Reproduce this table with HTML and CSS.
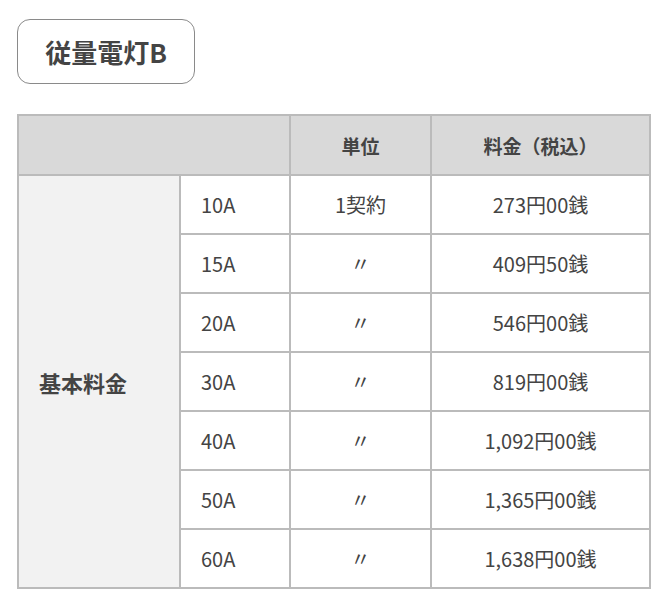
FILE: index.html
```html
<!DOCTYPE html>
<html lang="ja">
<head>
<meta charset="utf-8">
<link rel="stylesheet" href="styles.css">
</head>
<body>
<div class="page">
  <div class="title">従量電灯B</div>
  <table class="rates">
    <colgroup>
      <col class="c1"><col class="c2"><col class="c3"><col class="c4">
    </colgroup>
    <thead>
      <tr><th colspan="2"></th><th>単位</th><th>料金（税込）</th></tr>
    </thead>
    <tbody>
      <tr><th class="label" rowspan="7">基本料金</th><td class="amp">10A</td><td>1契約</td><td>273円00銭</td></tr>
      <tr><td class="amp">15A</td><td>〃</td><td>409円50銭</td></tr>
      <tr><td class="amp">20A</td><td>〃</td><td>546円00銭</td></tr>
      <tr><td class="amp">30A</td><td>〃</td><td>819円00銭</td></tr>
      <tr><td class="amp">40A</td><td>〃</td><td>1,092円00銭</td></tr>
      <tr><td class="amp">50A</td><td>〃</td><td>1,365円00銭</td></tr>
      <tr><td class="amp">60A</td><td>〃</td><td>1,638円00銭</td></tr>
    </tbody>
  </table>
</div>
</body>
</html>
```
FILE: styles.css
```css
html, body {
  margin: 0;
  padding: 0;
  background: #fff;
}
body {
  font-family: "Noto Sans CJK JP", "Noto Sans", sans-serif;
  color: #444;
}
.page {
  padding: 19px 0 0 17px;
}
.title {
  box-sizing: border-box;
  width: 178px;
  height: 65px;
  border: 1.5px solid #8a8a8a;
  border-radius: 13px;
  display: flex;
  align-items: center;
  justify-content: center;
  font-size: 26px;
  font-weight: bold;
  color: #444;
}
.rates {
  margin-top: 30px;
  border-collapse: collapse;
  width: 632px;
  table-layout: fixed;
  font-size: 20px;
}
.c1 { width: 162px; }
.c2 { width: 110px; }
.c3 { width: 141px; }
.c4 { width: 219px; }
.rates th, .rates td {
  border: 2px solid #bbb;
  height: 57px;
  padding: 0;
  text-align: center;
  font-weight: normal;
}
.rates thead th {
  background: #d9d9d9;
  font-weight: bold;
  font-size: 19px;
  height: 58px;
}
.rates th.label {
  background: #f2f2f2;
  font-weight: bold;
  font-size: 22px;
  text-align: left;
  padding-left: 20px;
}
.rates td.amp {
  text-align: left;
  padding-left: 20px;
}
```
